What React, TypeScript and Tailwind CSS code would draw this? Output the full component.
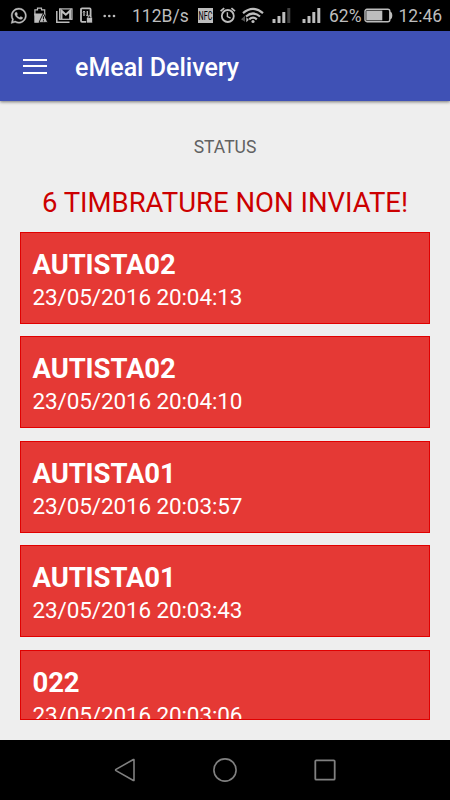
import { FaWhatsapp } from "react-icons/fa";

const timbrature = [
  { id: 1, name: "AUTISTA02", date: "23/05/2016 20:04:13" },
  { id: 2, name: "AUTISTA02", date: "23/05/2016 20:04:10" },
  { id: 3, name: "AUTISTA01", date: "23/05/2016 20:03:57" },
  { id: 4, name: "AUTISTA01", date: "23/05/2016 20:03:43" },
];

function Signal({ weak }: { weak?: boolean }) {
  return (
    <svg className="h-[17px] w-[20px]" viewBox="0 0 20 17" fill="currentColor">
      <rect x="0.5" y="12" width="3" height="4" rx="0.5" />
      <rect x="5.5" y="9" width="3" height="7" rx="0.5" />
      <rect x="10.3" y="5" width="3" height="11" rx="0.5" />
      <rect x="15.3" y="1" width="3" height="15" rx="0.5" opacity={weak ? 0.35 : 1} />
    </svg>
  );
}

function StatusBar() {
  return (
    <div className="flex h-[31px] shrink-0 items-center bg-black text-[17.5px] leading-none whitespace-nowrap text-[#bdbdbd]">
      <FaWhatsapp className="ml-[10px] size-[17.5px] shrink-0" stroke="currentColor" strokeWidth="12" />

      {/* battery warning */}
      <svg className="ml-[6.5px] h-[17px] w-[14px] shrink-0" viewBox="0 0 14 17">
        <path d="M3.5 1.2h4v1.7h3.2v5H.9v-5h2.6z" fill="none" stroke="currentColor" strokeWidth="1.2" />
        <path d="M.3 6.5h11v9.3H.3z" fill="currentColor" />
        <path d="M9.4 6.2l4.4 9.2H5z" fill="currentColor" stroke="#000" strokeWidth=".9" />
        <path d="M9.4 9.3v3M9.4 13.2v1.2" stroke="#000" strokeWidth="1" />
      </svg>

      {/* gmail stack */}
      <svg className="ml-[8px] h-[17px] w-[17px] shrink-0" viewBox="0 0 17 17" fill="none" stroke="currentColor">
        <path d="M.8 4v11.3h12.7" strokeWidth="1.5" />
        <rect x="3.6" y="1.9" width="12.4" height="10.4" strokeWidth="1.2" />
        <path d="M5.4 12V3.7l4.4 4 4.4-4V12" strokeWidth="2.1" />
      </svg>

      {/* phone with lock */}
      <svg className="ml-[7px] h-[17px] w-[13px] shrink-0" viewBox="0 0 13 17">
        <rect x="1" y="1.4" width="9.6" height="13.4" rx="1" fill="none" stroke="currentColor" strokeWidth="1.8" />
        <path d="M4 4v5M7.3 4v5" stroke="currentColor" strokeWidth="1.3" />
        <path d="M2.7 5.3L4 4l1.3 1.3M6 7.8l1.3 1.3 1.3-1.3" fill="none" stroke="currentColor" strokeWidth=".8" />
        <rect x="6.5" y="10.5" width="6" height="5.5" fill="currentColor" stroke="#000" strokeWidth=".7" />
        <path d="M8 11V9.5q1.5-1.7 3 0V11" fill="none" stroke="currentColor" />
      </svg>

      <svg className="ml-[10px] h-[4px] w-[13px] shrink-0" viewBox="0 0 13 4" fill="currentColor">
        <circle cx="1.7" cy="2" r="1.3" />
        <circle cx="6.3" cy="2" r="1.3" />
        <circle cx="11" cy="2" r="1.3" />
      </svg>

      <span className="ml-[16px] w-[58px] shrink-0 pt-[3px]">112B/s</span>

      <span className="ml-[8px] flex h-[15px] w-[15px] shrink-0 items-center justify-center bg-[#bdbdbd]">
        <span className="scale-x-[.6] scale-y-110 text-[12px] text-black">NFC</span>
      </span>

      {/* alarm */}
      <svg className="ml-[7px] h-[17px] w-[16px] shrink-0" viewBox="0 0 16 17" fill="none" stroke="currentColor">
        <circle cx="7.8" cy="9" r="6" strokeWidth="1.8" />
        <path d="M.6 4.1L4.2 1.1M11.4 1.1L15 4.1" strokeWidth="1.8" />
        <path d="M7.4 5.3v4.2l3.2 1.7" strokeWidth="1.4" />
      </svg>

      {/* wifi with traffic arrows */}
      <svg className="ml-[5px] h-[17px] w-[24px] shrink-0" viewBox="0 0 24 17" fill="none" stroke="currentColor">
        <path d="M2 6.2q10-8.6 20 0M5 9.5q7-6 14 0M8.2 12.3q3.8-3.2 7.6 0" strokeWidth="2.2" />
        <circle cx="12" cy="14.5" r="1.6" fill="currentColor" stroke="none" />
        <path d="M0 12.3l4-3.5v6z" fill="currentColor" stroke="none" opacity=".45" />
        <path d="M5.3 10.2v5l2.5-2.5z" fill="currentColor" stroke="none" />
      </svg>

      <span className="ml-[7px] w-[20px] shrink-0"><Signal weak /></span>
      <span className="ml-[10px] w-[20px] shrink-0"><Signal /></span>

      <span className="ml-[7px] w-[34px] shrink-0 pt-[3px]">62%</span>

      <svg className="ml-[1px] h-[15px] w-[29px] shrink-0" viewBox="0 0 29 15">
        <rect x="1" y="1.3" width="24.8" height="12.4" rx="2" fill="none" stroke="currentColor" strokeWidth="1.4" />
        <rect x="2.3" y="2.6" width="16" height="9.8" fill="currentColor" />
        <path d="M26 3.5q2.3.6 2.3 4T26 11.5z" fill="currentColor" />
      </svg>

      <span className="ml-[5.5px] shrink-0 pt-[3px]">12:46</span>
    </div>
  );
}

function Card({ name, date }: { name: string; date: string }) {
  return (
    <div className="h-[92px] shrink-0 border border-[#e00000] bg-[#e53935] pt-[15px] pl-[11.5px] text-white">
      <h3 className="text-[27.5px] leading-[33px] font-bold tracking-[-0.1px]">{name}</h3>
      <p className="text-[22.5px] leading-[32px] tracking-[-0.12px]">{date}</p>
    </div>
  );
}

export default function App() {
  return (
    <div className="flex h-[800px] w-[450px] flex-col overflow-hidden bg-[#eeeeee] font-[Roboto,sans-serif]">
      <StatusBar />

      <header className="flex h-[70px] shrink-0 items-center bg-[#3f51b5] pl-[23px] text-white shadow-[0_1px_3px_rgba(0,0,0,0.5)]">
        <button className="flex w-[24px] flex-col gap-[4.5px]">
          <span className="h-[2px] w-full bg-white" />
          <span className="h-[2px] w-full bg-white" />
          <span className="h-[2px] w-full bg-white" />
        </button>
        <h1 className="ml-[28px] pt-[3px] text-[25px] leading-[30px] font-medium">eMeal Delivery</h1>
      </header>

      <main className="flex flex-1 flex-col px-5 pt-[35px] pb-5">
        <p className="text-center text-[17.5px] leading-[22px] text-[#616161]">STATUS</p>
        <h2 className="mt-[28px] text-center text-[27.5px] leading-[34px] text-[#cc0000]">6 TIMBRATURE NON INVIATE!</h2>

        <div className="mt-[12px] flex h-[488px] flex-col gap-[12.45px] overflow-hidden">
          {timbrature.map((item) => (
            <Card key={item.id} name={item.name} date={item.date} />
          ))}
          <div className="min-h-0 flex-1 overflow-hidden border-b border-[#e00000]">
            <Card name="022" date="23/05/2016 20:03:06" />
          </div>
        </div>
      </main>

      <nav className="flex h-[60px] shrink-0 items-center justify-center gap-[76px] bg-black text-[#808080]">
        <svg className="size-6" viewBox="0 0 24 24" fill="none" stroke="currentColor" strokeWidth="1.6" strokeLinejoin="round">
          <path d="M21 1.8v20.4q0 .5-.6.3L3 12.6q-.8-.6 0-1.2L20.4 1.5q.6-.2.6.3z" />
        </svg>
        <svg className="size-6" viewBox="0 0 24 24" fill="none" stroke="currentColor" strokeWidth="1.6">
          <circle cx="12" cy="12" r="11.1" />
        </svg>
        <svg className="size-6" viewBox="0 0 24 24" fill="none" stroke="currentColor" strokeWidth="1.8">
          <rect x="2.3" y="2.3" width="19.4" height="19.4" rx="1" />
        </svg>
      </nav>
    </div>
  );
}
